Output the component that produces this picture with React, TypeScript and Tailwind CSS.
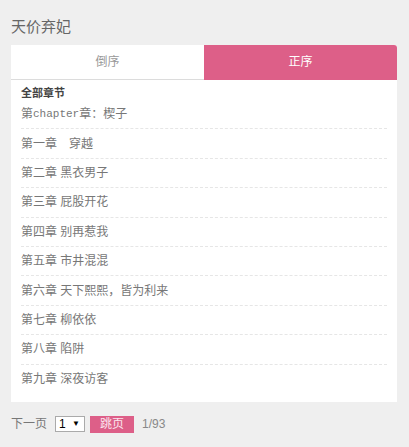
const chapters: [string, string?, string?][] = [
  ["第", "chapter", "章：楔子"],
  ["第一章\u3000穿越"],
  ["第二章 黑衣男子"],
  ["第三章 屁股开花"],
  ["第四章 别再惹我"],
  ["第五章 市井混混"],
  ["第六章 天下熙熙，皆为利来"],
  ["第七章 柳依依"],
  ["第八章 陷阱"],
  ["第九章 深夜访客"],
];

export default function App() {
  return (
    <div
      className="min-h-[447px] w-full bg-[#efefef] pl-[11px] pr-[12px] text-[12px] text-[#777]"
      style={{ fontFamily: '"Liberation Sans", "Noto Sans CJK SC", sans-serif' }}
    >
      <h1 className="pt-[15px] pb-[6px] text-[15px] leading-[24px] font-normal text-[#666]">天价弃妃</h1>

      <section className="bg-white rounded-tr-[3px]">
        <div className="grid grid-cols-2 h-[35px]">
          <button type="button" className="border-b border-[#dcdcdc] text-[#999] leading-[34px]">
            倒序
          </button>
          <button type="button" className="bg-[#dd5f88] text-white rounded-tr-[3px] leading-[35px]">
            正序
          </button>
        </div>

        <div className="px-[10px] pb-[8px]">
          <p className="pt-[6px] leading-[14px] text-[11px] font-bold text-[#444]">全部章节</p>
          <ul>
            {chapters.map(([a, mono, b], i) => (
              <li
                key={a + (b ?? "")}
                className={`h-[29.4px] flex items-center ${
                  i < chapters.length - 1 ? "border-b border-dashed border-[#e6e6e6]" : ""
                }`}
              >
                {a}
                {mono && <span className="font-['Liberation_Mono'] text-[11px]">{mono}</span>}
                {b}
              </li>
            ))}
          </ul>
        </div>
      </section>

      <div className="flex items-center h-[17px] mt-[14px]">
        <span className="text-[#777]">下一页</span>
        <div className="ml-[8px] flex items-center justify-between h-[16px] w-[30px] border border-[#aaa] bg-white pl-[3px] pr-[4px] text-[12px] text-black">
          <span>1</span>
          <span className="text-[8px]">▼</span>
        </div>
        <button type="button" className="ml-[5px] h-[17px] w-[44px] bg-[#dd5f88] text-[#fbe6ee] text-[12px] leading-[17px]">
          跳页
        </button>
        <span className="ml-[8px] text-[#888]">1/93</span>
      </div>
    </div>
  );
}
